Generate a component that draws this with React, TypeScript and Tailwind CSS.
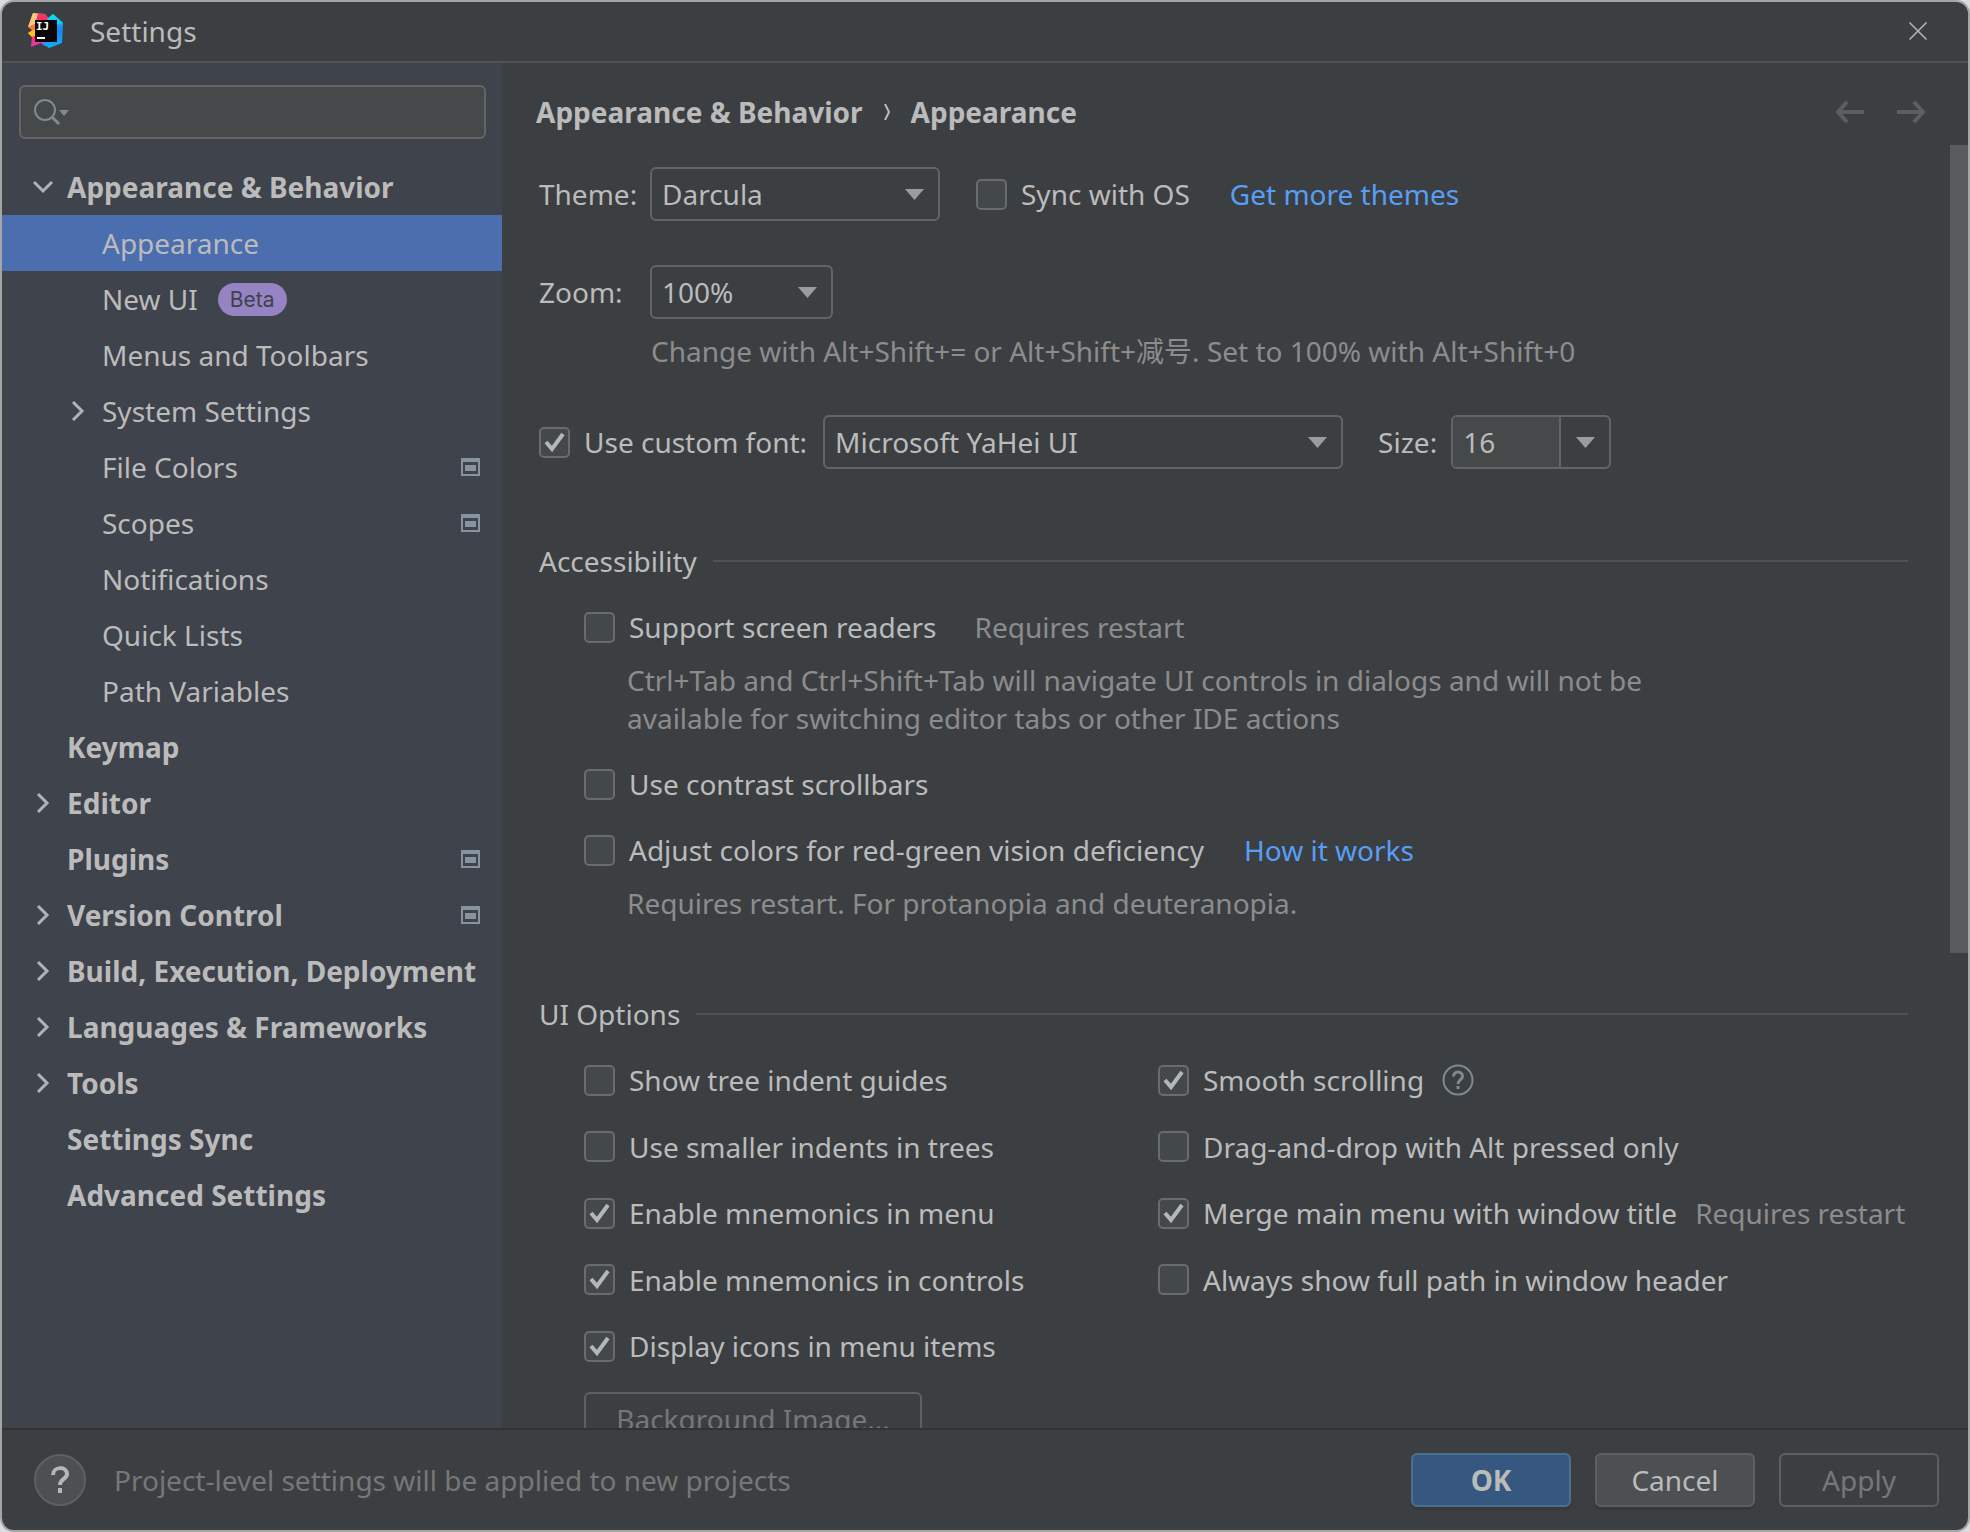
import { useState } from "react";
import type { ReactNode } from "react";

type TreeItem = {
  label: string;
  level: 0 | 1;
  state?: "open" | "closed";
  selected?: boolean;
  badge?: string;
  project?: boolean;
};

const TREE: TreeItem[] = [
  { label: "Appearance & Behavior", level: 0, state: "open" },
  { label: "Appearance", level: 1, selected: true },
  { label: "New UI", level: 1, badge: "Beta" },
  { label: "Menus and Toolbars", level: 1 },
  { label: "System Settings", level: 1, state: "closed" },
  { label: "File Colors", level: 1, project: true },
  { label: "Scopes", level: 1, project: true },
  { label: "Notifications", level: 1 },
  { label: "Quick Lists", level: 1 },
  { label: "Path Variables", level: 1 },
  { label: "Keymap", level: 0 },
  { label: "Editor", level: 0, state: "closed" },
  { label: "Plugins", level: 0, project: true },
  { label: "Version Control", level: 0, state: "closed", project: true },
  { label: "Build, Execution, Deployment", level: 0, state: "closed" },
  { label: "Languages & Frameworks", level: 0, state: "closed" },
  { label: "Tools", level: 0, state: "closed" },
  { label: "Settings Sync", level: 0 },
  { label: "Advanced Settings", level: 0 },
];

function Logo() {
  return (
    <svg width="36" height="36" viewBox="0 0 36 36" aria-hidden="true">
      <defs>
        <linearGradient id="warm" x1="0" y1="0" x2="0.3" y2="1">
          <stop offset="0" stopColor="#fdb45b" />
          <stop offset="0.3" stopColor="#fe5f9a" />
          <stop offset="0.5" stopColor="#fd8224" />
          <stop offset="0.75" stopColor="#fe2c76" />
          <stop offset="1" stopColor="#e637c0" />
        </linearGradient>
        <linearGradient id="cool" x1="0.5" y1="0" x2="0.5" y2="1">
          <stop offset="0" stopColor="#08c8f0" />
          <stop offset="0.5" stopColor="#1a86fc" />
          <stop offset="1" stopColor="#07b3f7" />
        </linearGradient>
      </defs>
      <path d="M5 0 L17 1 L21 6 L24 31 L17 33 L13 30 L3 34 L4 24 L0 20 L4 17 L0 14 Z" fill="url(#warm)" />
      <path d="M5 0 L10 1 L7 11 L0 14 Z" fill="#fcc877" />
      <path d="M10 1 L17 1 L21 7 L8 8 Z" fill="#fb2f6b" />
      <path d="M0 20 L8 16 L8 22 L4 24 Z" fill="#fdc51b" />
      <path d="M11 28 L20 28 L17 33 L13 30 Z" fill="#b345f1" />
      <path d="M25 1 L35 10 L34 30 L21 35 L14 30 L28 28 L28 7 L19 6 Z" fill="url(#cool)" />
      <path d="M25 1 L35 10 L28 12 L19 6 Z" fill="#10d3f4" />
      <rect x="7" y="7" width="22" height="22" fill="#0b0708" />
      <text x="8" y="17" fill="#fff" fontSize="11" fontWeight="700" fontFamily="DejaVu Sans Mono, monospace">
        IJ
      </text>
      <rect x="9" y="24" width="8" height="2" fill="#fff" />
    </svg>
  );
}

function Chevron({ open }: { open: boolean }) {
  return (
    <svg width="20" height="24" viewBox="0 0 20 24" fill="none" stroke="#b0b2b4" strokeWidth="3" aria-hidden="true">
      <path d={open ? "M1 7 L10 16 L19 7" : "M5 3 L14 12 L5 21"} />
    </svg>
  );
}

function ProjectIcon() {
  return (
    <svg width="19" height="18" viewBox="0 0 19 18" aria-hidden="true">
      <path fillRule="evenodd" fill="#87939f" d="M0 0H19V18H0Z M2 4V16H17V4Z" />
      <rect x="4" y="7" width="11" height="6" fill="#87939f" />
    </svg>
  );
}

function Triangle() {
  return (
    <svg width="19" height="11" viewBox="0 0 19 11" aria-hidden="true">
      <path d="M0 0H19L9.500 11Z" fill="#9a9da0" />
    </svg>
  );
}

function Tree() {
  return (
    <ul className="mt-5">
      {TREE.map((item) => (
        <li key={item.label}>
          <button
            type="button"
            className={
              "flex h-14 w-full items-center pr-[22px] text-left " +
              (item.level === 0 ? "pl-[31px] font-bold " : "pl-[66px] ") +
              (item.selected ? "bg-[#4b6eaf]" : "")
            }
          >
            <span className="flex w-[34px] shrink-0">{item.state && <Chevron open={item.state === "open"} />}</span>
            <span className="whitespace-nowrap">{item.label}</span>
            {item.badge && (
              <span className="ml-5 rounded-full bg-[#9583c4] px-3 font-[Inter,sans-serif] text-[21px] leading-[33px] text-[#3f434c]">
                {item.badge}
              </span>
            )}
            {item.project && (
              <span className="ml-auto">
                <ProjectIcon />
              </span>
            )}
          </button>
        </li>
      ))}
    </ul>
  );
}

function Check({ label, on = false, children }: { label: string; on?: boolean; children?: ReactNode }) {
  const [checked, setChecked] = useState(on);
  return (
    <div className="flex h-[38px] items-center whitespace-nowrap">
      <label className="flex items-center gap-3.5">
        <span className="grid">
          <input
            type="checkbox"
            checked={checked}
            onChange={(e) => setChecked(e.target.checked)}
            className="col-start-1 row-start-1 size-[31px] appearance-none rounded-[5px] border-2 border-[#6b6b6b] bg-[#43494a]"
          />
          {checked && (
            <svg
              className="pointer-events-none col-start-1 row-start-1"
              width="31"
              height="31"
              viewBox="0 0 31 31"
              fill="none"
              stroke="#b4b6b8"
              strokeWidth="4"
              aria-hidden="true"
            >
              <path d="M7 15 L13 22 L24 7" />
            </svg>
          )}
        </span>
        {label}
      </label>
      {children}
    </div>
  );
}

function Select({ id, value, width }: { id: string; value: string; width: string }) {
  return (
    <span className={"grid items-center " + width}>
      <select
        id={id}
        defaultValue={value}
        className="col-start-1 row-start-1 h-[54px] w-full appearance-none rounded-[6px] border-2 border-[#646464] bg-[#3c3f41] pl-2.5"
      >
        <option>{value}</option>
      </select>
      <span className="pointer-events-none col-start-1 row-start-1 mr-4 justify-self-end">
        <Triangle />
      </span>
    </span>
  );
}

function SectionTitle({ children }: { children: ReactNode }) {
  return (
    <div className="mt-[73px] mb-7 flex items-center gap-4">
      <h2>{children}</h2>
      <div className="h-0.5 flex-1 bg-[#515151]" />
    </div>
  );
}

function Link({ children }: { children: ReactNode }) {
  return (
    <a href="#" className="ml-10 text-[#589df6]">
      {children}
    </a>
  );
}

function HistoryArrow({ label, path }: { label: string; path: string }) {
  return (
    <button type="button" aria-label={label} disabled>
      <svg width="30" height="22" viewBox="0 0 30 22" fill="none" stroke="#5c5e60" strokeWidth="4" aria-hidden="true">
        <path d={path} />
      </svg>
    </button>
  );
}

export default function App() {
  return (
    <div className="h-screen bg-[#dcdcdc] font-['Noto_Sans','Noto_Sans_CJK_SC',sans-serif] text-[28px] leading-[38px] text-[#bbbbbb]">
      <div className="flex h-full flex-col overflow-hidden rounded-[14px] border-2 border-[#a5a5a5] bg-[#3c3f41]">
        <header className="flex h-[61px] shrink-0 items-center border-b-2 border-[#515151] pr-[41px] pb-0.5 pl-[26px]">
          <Logo />
          <h1 className="ml-[26px] flex-1">Settings</h1>
          <button type="button" aria-label="Close">
            <svg width="18" height="18" viewBox="0 0 18 18" stroke="#b4b6b8" strokeWidth="1.500" aria-hidden="true">
              <path d="M0.500 0.500 L17.500 17.500 M17.500 0.500 L0.500 17.500" />
            </svg>
          </button>
        </header>

        <div className="flex min-h-0 flex-1">
          <nav aria-label="Settings" className="w-[500px] shrink-0 overflow-hidden bg-[#3f434c] pt-[22px]">
            <div className="mr-4 ml-[17px] grid items-center">
              <input
                type="search"
                aria-label="Search settings"
                className="col-start-1 row-start-1 h-[54px] w-full rounded-[6px] border-2 border-[#646464] bg-[#45494a] pl-14"
              />
              <svg
                className="pointer-events-none col-start-1 row-start-1 ml-[15px]"
                width="36"
                height="28"
                viewBox="0 0 36 28"
                fill="none"
                stroke="#7f8b91"
                aria-hidden="true"
              >
                <circle cx="11" cy="12" r="10" strokeWidth="2" />
                <path d="M18 19 L25 26" strokeWidth="3" />
                <path d="M25 12H35L30 18Z" fill="#7f8b91" stroke="none" />
              </svg>
            </div>
            <Tree />
          </nav>

          <main className="flex min-w-0 flex-1 flex-col">
            <div className="flex h-[82px] shrink-0 items-center pt-4 pr-[42px] pl-[34px]">
              <div className="flex flex-1 items-center gap-[21px] font-bold">
                <span>Appearance &amp; Behavior</span>
                <svg width="6" height="16" viewBox="0 0 6 16" fill="none" stroke="#bbbbbb" strokeWidth="2" aria-hidden="true">
                  <path d="M1 0 L5 8 L1 16" />
                </svg>
                <span>Appearance</span>
              </div>
              <div className="flex gap-[31px]">
                <HistoryArrow label="Back" path="M29 11 H4 M12 1 L3 11 L12 21" />
                <HistoryArrow label="Forward" path="M1 11 H26 M18 1 L27 11 L18 21" />
              </div>
            </div>

            <div className="flex min-h-0 flex-1">
              <div className="min-w-0 flex-1 overflow-hidden pt-[22px] pr-[42px] pl-[37px]">
                <div className="flex items-center">
                  <label htmlFor="theme" className="w-[111px]">
                    Theme:
                  </label>
                  <Select id="theme" value="Darcula" width="w-[290px] mr-9" />
                  <Check label="Sync with OS">
                    <Link>Get more themes</Link>
                  </Check>
                </div>
                <div className="mt-11 flex items-center">
                  <label htmlFor="zoom" className="w-[111px]">
                    Zoom:
                  </label>
                  <Select id="zoom" value="100%" width="w-[183px]" />
                </div>
                <p className="mt-[13px] ml-[112px] whitespace-nowrap text-[#8c8c8c]">
                  Change with Alt+Shift+= or Alt+Shift+减号. Set to 100% with Alt+Shift+0
                </p>
                <div className="mt-[45px] flex items-center">
                  <Check label="Use custom font:" on />
                  <div className="w-4" />
                  <Select id="font" value="Microsoft YaHei UI" width="w-[520px]" />
                  <label htmlFor="size" className="mr-3.5 ml-[35px]">
                    Size:
                  </label>
                  <div className="flex h-[54px] w-[160px] overflow-hidden rounded-[6px] border-2 border-[#646464]">
                    <input id="size" defaultValue="16" className="min-w-0 flex-1 bg-[#45494a] pl-2.5" />
                    <button
                      type="button"
                      aria-label="Choose size"
                      className="flex w-[50px] items-center justify-center border-l-2 border-[#646464]"
                    >
                      <Triangle />
                    </button>
                  </div>
                </div>

                <SectionTitle>Accessibility</SectionTitle>
                <div className="pl-[45px]">
                  <Check label="Support screen readers">
                    <span className="ml-[38px] text-[#8c8c8c]">Requires restart</span>
                  </Check>
                  <p className="mt-[15px] ml-[43px] text-[#8c8c8c]">
                    Ctrl+Tab and Ctrl+Shift+Tab will navigate UI controls in dialogs and will not be
                    <br />
                    available for switching editor tabs or other IDE actions
                  </p>
                  <div className="mt-7">
                    <Check label="Use contrast scrollbars" />
                  </div>
                  <div className="mt-7">
                    <Check label="Adjust colors for red-green vision deficiency">
                      <Link>How it works</Link>
                    </Check>
                  </div>
                  <p className="mt-[15px] ml-[43px] text-[#8c8c8c]">
                    Requires restart. For protanopia and deuteranopia.
                  </p>
                </div>

                <SectionTitle>UI Options</SectionTitle>
                <div className="pl-[45px]">
                  <div className="grid h-[304px] grid-cols-[574px_auto] content-between">
                    <Check label="Show tree indent guides" />
                    <Check label="Smooth scrolling" on>
                      <button type="button" aria-label="Smooth scrolling help" className="ml-[18px]">
                        <svg width="32" height="32" viewBox="0 0 32 32" fill="none" stroke="#7f8b91" strokeWidth="2" aria-hidden="true">
                          <circle cx="16" cy="16" r="14.500" />
                          <path d="M11.500 12.500 C11.500 6.500 20.500 6.500 20.500 12.500 C20.500 15.500 16 16 16 20" strokeWidth="3" />
                          <path d="M16 22 V25" strokeWidth="3" />
                        </svg>
                      </button>
                    </Check>
                    <Check label="Use smaller indents in trees" />
                    <Check label="Drag-and-drop with Alt pressed only" />
                    <Check label="Enable mnemonics in menu" on />
                    <Check label="Merge main menu with window title" on>
                      <span className="ml-[18px] text-[#8c8c8c]">Requires restart</span>
                    </Check>
                    <Check label="Enable mnemonics in controls" on />
                    <Check label="Always show full path in window header" />
                    <Check label="Display icons in menu items" on />
                  </div>
                  <button
                    type="button"
                    disabled
                    className="mt-[27px] h-[54px] w-[338px] rounded-[6px] border-2 border-[#5e6060] text-[#777777]"
                  >
                    Background Image...
                  </button>
                </div>
              </div>
              <div className="w-[18px] shrink-0">
                <div className="h-[63%] bg-[#5a5b5d]" />
              </div>
            </div>
          </main>
        </div>

        <footer className="flex h-[102px] shrink-0 items-center border-t-2 border-[#323232] pr-[29px] pl-8">
          <button
            type="button"
            aria-label="Help"
            className="grid size-[52px] place-items-center rounded-full border-2 border-[#5e6060] bg-[#4c5052]"
          >
            <svg width="20" height="28" viewBox="0 0 20 28" fill="none" stroke="#b4b6b8" strokeWidth="4" aria-hidden="true">
              <path d="M3 9 C3 0 17 0 17 8 C17 13 10 13 10 19" />
              <path d="M10 22 V27" />
            </svg>
          </button>
          <p className="ml-7 flex-1 text-[#777777]">Project-level settings will be applied to new projects</p>
          <div className="flex gap-6">
            <button
              type="button"
              className="h-[54px] w-40 rounded-[6px] border-2 border-[#4c708c] bg-[#365880] font-bold shadow-[0_3px_1px_#36383a]"
            >
              OK
            </button>
            <button
              type="button"
              className="h-[54px] w-40 rounded-[6px] border-2 border-[#5e6060] bg-[#4c5052] shadow-[0_3px_1px_#36383a]"
            >
              Cancel
            </button>
            <button
              type="button"
              disabled
              className="h-[54px] w-40 rounded-[6px] border-2 border-[#5e6060] text-[#777777]"
            >
              Apply
            </button>
          </div>
        </footer>
      </div>
    </div>
  );
}
